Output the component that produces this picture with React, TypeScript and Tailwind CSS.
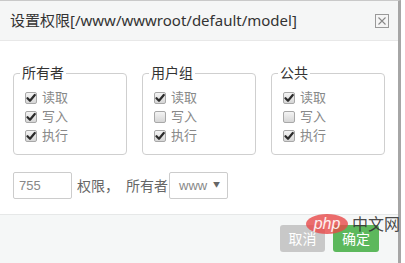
const FONT = "font-['Noto_Sans','Noto_Sans_CJK_SC',sans-serif]";
const ARIAL = "font-['Liberation_Sans','Noto_Sans_CJK_SC',sans-serif]";

interface PermGroup {
  label: string;
  read: boolean;
  write: boolean;
  exec: boolean;
}

const groups: PermGroup[] = [
  { label: "所有者", read: true, write: true, exec: true },
  { label: "用户组", read: true, write: false, exec: true },
  { label: "公共", read: true, write: false, exec: true },
];

function Check({ checked }: { checked: boolean }) {
  return (
    <span className="relative flex h-[12px] w-[12px] items-center justify-center rounded-[2px] border border-[#a8a8a8] bg-gradient-to-b from-[#f4f4f4] to-[#d6d6d6]">
      {checked && (
        <svg width="10" height="10" viewBox="0 0 10 10" className="absolute">
          <path d="M1.5 5.2 L4 7.8 L8.8 2" fill="none" stroke="#2b2b2b" strokeWidth="2.2" strokeLinecap="round" strokeLinejoin="round" />
        </svg>
      )}
    </span>
  );
}

function Row({ checked, text }: { checked: boolean; text: string }) {
  return (
    <label className="flex h-[19px] items-center gap-[5px]">
      <Check checked={checked} />
      <span className="text-[13px] leading-none text-[#888]">{text}</span>
    </label>
  );
}

export default function App() {
  return (
    <div className={`relative h-[263px] w-[405px] overflow-hidden bg-white ${FONT}`}>
      <div className="flex h-full w-[401px] flex-col border-t border-r-[3px] border-t-[#c9c9c9] border-r-[#a6a6a6] bg-white">
        {/* header */}
        <div className="flex h-[40px] shrink-0 items-center justify-between border-b border-[#e8e8e8] bg-[#f5f6f6] pl-[10px] pr-[9px]">
          <h2 className="text-[15px] font-normal text-[#333]">设置权限[/www/wwwroot/default/model]</h2>
          <button className="flex h-[14px] w-[14px] items-center justify-center border border-[#999] bg-[#f5f5f5]" aria-label="close">
            <svg width="8" height="8" viewBox="0 0 8 8">
              <path d="M0.5 0.5 L7.5 7.5 M7.5 0.5 L0.5 7.5" stroke="#888" strokeWidth="1.1" />
            </svg>
          </button>
        </div>

        {/* body */}
        <div className="flex-1 px-[13px] pt-[24px]">
          <div className="flex gap-[15px]">
            {groups.map((g) => (
              <fieldset key={g.label} className="w-[114px] rounded-[4px] border border-[#cfcfcf] pb-[9px] pl-[6px]">
                <legend className="px-[2px] text-[14px] leading-[16px] text-[#333]">{g.label}</legend>
                <div className="pl-[5px] pt-[7px]">
                  <Row checked={g.read} text="读取" />
                  <Row checked={g.write} text="写入" />
                  <Row checked={g.exec} text="执行" />
                </div>
              </fieldset>
            ))}
          </div>

          <div className="mt-[17px] flex h-[27px] items-center text-[14px] text-[#666]">
            <input
              defaultValue="755"
              className={`h-[27px] w-[59px] rounded-[2px] border border-[#ccc] px-[5px] text-[13px] text-[#888] outline-none ${ARIAL}`}
            />
            <span className="ml-[5px]">权限，</span>
            <span className="ml-[7px]">所有者</span>
            <div className="ml-[1px] flex h-[27px] w-[59px] items-center justify-between rounded-[2px] border border-[#ccc] pl-[9px] pr-[7px]">
              <span className={`text-[13px] text-[#888] ${ARIAL}`}>www</span>
              <span className="text-[7px] text-[#666]">▼</span>
            </div>
          </div>
        </div>

        {/* footer */}
        <div className="flex h-[49px] shrink-0 justify-end gap-[8px] border-t border-[#e6e8e8] bg-[#f5f7f7] pr-[19px] pt-[10px]">
          <button className="h-[27px] w-[45px] rounded-[3px] bg-[#c8c8c8] text-[14px] text-white">取消</button>
          <button className="h-[27px] w-[46px] rounded-[3px] bg-[#5cb85c] text-[14px] text-white">确定</button>
        </div>
      </div>

      {/* watermark */}
      <div className="pointer-events-none absolute left-[306px] top-[214px] flex h-[20px] items-center">
        <div className="flex h-[20px] w-[42px] items-center justify-center rounded-[50%] bg-[#e84848]/80">
          <span className={`text-[16px] italic leading-none text-white/90 ${ARIAL}`}>php</span>
        </div>
        <span className="ml-[4px] text-[16px] leading-none text-[#333]/90">中文网</span>
      </div>
    </div>
  );
}
